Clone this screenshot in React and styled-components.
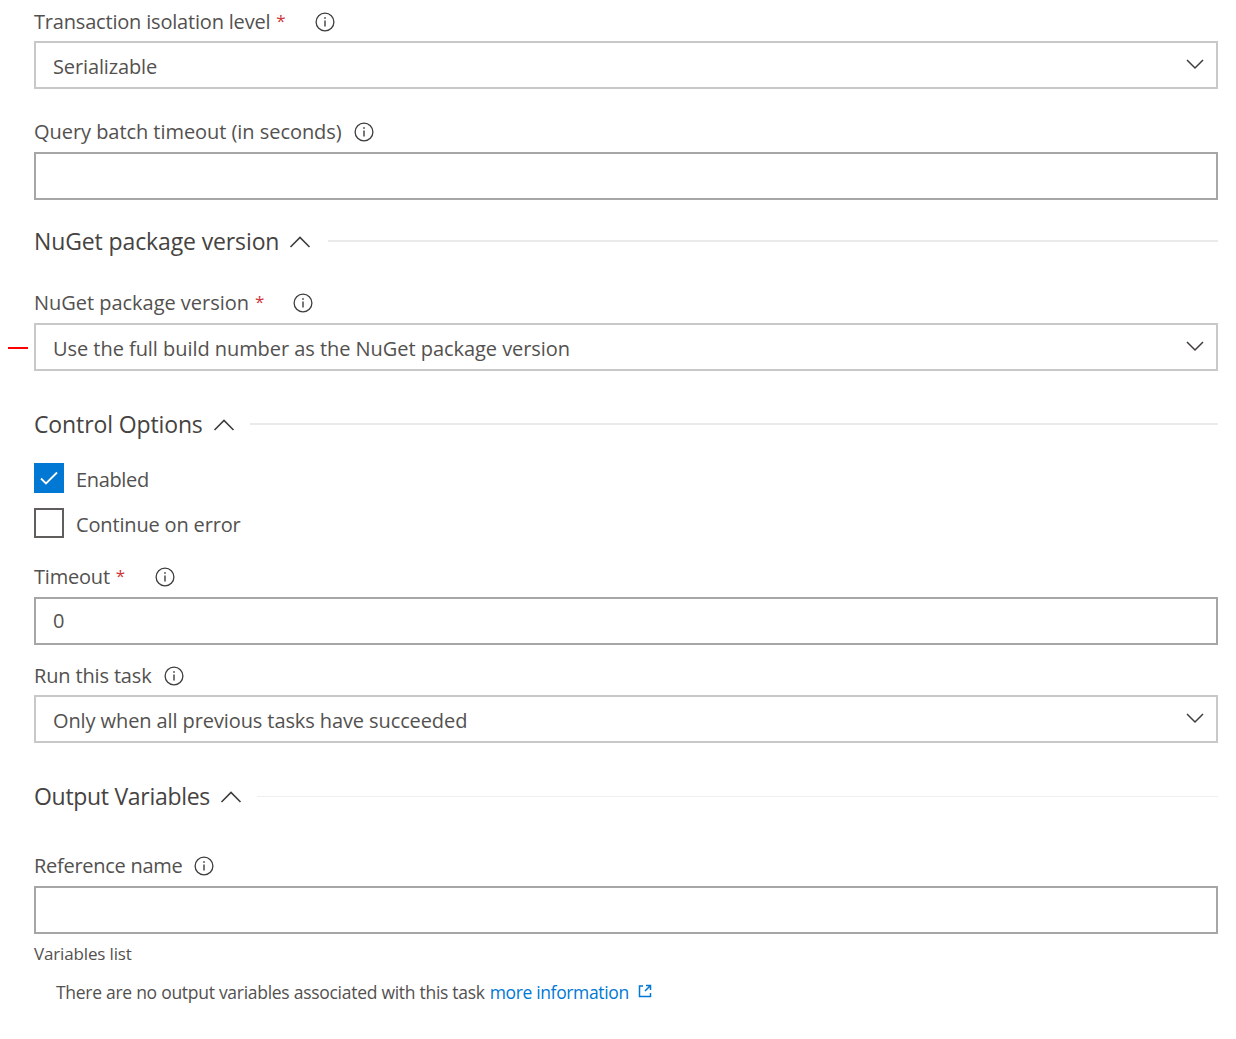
import React from "react";
import styled, { createGlobalStyle } from "styled-components";

const GlobalStyle = createGlobalStyle`
  html, body {
    margin: 0;
    padding: 0;
    background: #fff;
    font-family: "Open Sans", "Noto Sans", sans-serif;
    color: #323130;
  }
`;

const Page = styled.div`
  display: flex;
  flex-direction: column;
  padding: 0 18px 0 34px;
  height: 1039px;
  box-sizing: border-box;
  overflow: hidden;
`;

const Field = styled.div`
  position: relative;
  display: flex;
  flex-direction: column;
  margin-top: ${props => props.$top || 0}px;
`;

const LabelRow = styled.div`
  display: flex;
  align-items: center;
  height: 24px;
  box-sizing: border-box;
  padding-bottom: 2px;
  margin-bottom: ${props => props.$gap || 7}px;
  font-size: 20px;
  letter-spacing: ${props => props.$spacing ?? -0.08}px;
  color: #53514f;
  white-space: nowrap;
`;

const Star = styled.span`
  color: #d13438;
  font-size: 17px;
  margin: -2px 0 0 6px;
`;

const InfoWrap = styled.span`
  display: inline-flex;
  margin: 2px 0 0 ${props => props.$left}px;
`;

const Box = styled.div`
  display: flex;
  align-items: center;
  justify-content: space-between;
  height: 48px;
  box-sizing: border-box;
  padding: ${props => (props.$light ? "2px" : "0")} 11px ${props => (props.$light ? "0" : "2px")} 17px;
  background: #fff;
  border: 2px solid ${props => (props.$light ? "#c8c8c8" : "#a6a6a6")};
  font-size: 20px;
  letter-spacing: ${props => props.$spacing ?? -0.05}px;
  color: #53514f;
  white-space: nowrap;
`;

const Dash = styled.span`
  position: absolute;
  left: -26px;
  bottom: 22px;
  width: 20px;
  height: 2px;
  background: #ff0000;
`;

const Section = styled.div`
  display: flex;
  align-items: center;
  height: 32px;
  margin-top: ${props => props.$top}px;
`;

const SectionTitle = styled.span`
  margin-top: -2px;
  font-size: 23px;
  letter-spacing: ${props => props.$spacing ?? -0.12}px;
  color: #454341;
  white-space: nowrap;
`;

const SectionChevron = styled.svg`
  width: 22px;
  height: 12px;
  margin-left: 10px;
  flex: none;
  fill: none;
  stroke: #3f3d3b;
  stroke-width: 1.6;
`;

const Rule = styled.div`
  flex: 1;
  height: ${props => (props.$thin ? 1 : 2)}px;
  margin: 0 0 2px ${props => props.$gap}px;
  background: ${props => (props.$thin ? "#eeeeee" : "#eaeaea")};
`;

const CheckRow = styled.label`
  display: flex;
  align-items: center;
  gap: 12px;
  height: 30px;
  margin-top: ${props => props.$top}px;
  font-size: 20px;
  letter-spacing: ${props => props.$spacing}px;
  color: #53514f;
`;

const CheckText = styled.span`
  margin-top: 2px;
`;

const CheckBox = styled.span`
  display: flex;
  align-items: center;
  justify-content: center;
  width: 30px;
  height: 30px;
  box-sizing: border-box;
  background: ${props => (props.$checked ? "#0078d4" : "#fff")};
  border: 2px solid ${props => (props.$checked ? "#0078d4" : "#605e5c")};
`;

const SmallLabel = styled.div`
  margin-top: 8px;
  height: 24px;
  line-height: 24px;
  font-size: 17px;
  letter-spacing: -0.15px;
  color: #53514f;
`;

const Note = styled.div`
  display: flex;
  align-items: center;
  height: 24px;
  margin: 14px 0 0 22px;
  font-size: 17.5px;
  letter-spacing: -0.28px;
  color: #53514f;
  white-space: nowrap;
`;

const MoreLink = styled.a`
  margin-left: 5px;
  letter-spacing: -0.36px;
  color: #0078d4;
  text-decoration: none;
`;

const LinkIcon = styled.svg`
  width: 14px;
  height: 14px;
  margin: -2px 0 0 9px;
  fill: none;
  stroke: #0078d4;
  stroke-width: 1.5;
`;

const CaretIcon = styled.svg`
  width: 20px;
  height: 12px;
  margin-top: -4px;
  fill: none;
  stroke: #3f3d3b;
  stroke-width: 1.5;
`;

const Info = ({ left }) => (
  <InfoWrap $left={left}>
    <svg width="20" height="20" viewBox="0 0 20 20" fill="none" stroke="#3f3d3b" strokeWidth="1.3">
      <circle cx="10" cy="10" r="8.9" />
      <path d="M10 8.6v6" strokeWidth="1.4" />
      <path d="M10 5.2v1.6" strokeWidth="1.6" />
    </svg>
  </InfoWrap>
);

const Label = ({ text, required, infoLeft, gap, spacing }) => (
  <LabelRow $gap={gap} $spacing={spacing}>
    {text}
    {required && <Star>*</Star>}
    <Info left={infoLeft} />
  </LabelRow>
);

const Select = ({ value, spacing }) => (
  <Box $light $spacing={spacing}>
    {value}
    <CaretIcon viewBox="0 0 20 12">
      <path d="M2 2l8 8 8-8" />
    </CaretIcon>
  </Box>
);

const SectionHead = ({ title, top, thin, spacing, ruleGap }) => (
  <Section $top={top}>
    <SectionTitle $spacing={spacing}>{title}</SectionTitle>
    <SectionChevron viewBox="0 0 22 12">
      <path d="M1.5 11L11 1.5l9.5 9.5" />
    </SectionChevron>
    <Rule $thin={thin} $gap={ruleGap} />
  </Section>
);

export default function App() {
  return (
    <Page>
      <GlobalStyle />
      <Field $top={10}>
        <Label text="Transaction isolation level" required infoLeft={29} spacing={-0.19} />
        <Select value="Serializable" spacing={-0.13} />
      </Field>
      <Field $top={31}>
        <Label text="Query batch timeout (in seconds)" infoLeft={12} gap={8} spacing={-0.05} />
        <Box />
      </Field>
      <SectionHead title="NuGet package version" top={26} ruleGap={17} />
      <Field $top={33}>
        <Label text="NuGet package version" required infoLeft={29} gap={8} spacing={-0.03} />
        <Select value="Use the full build number as the NuGet package version" />
        <Dash />
      </Field>
      <SectionHead title="Control Options" top={38} ruleGap={15} />
      <CheckRow $top={22} $spacing={-0.35}>
        <CheckBox $checked>
          <svg width="18" height="14" viewBox="0 0 18 14" fill="none" stroke="#fff" strokeWidth="1.8">
            <path d="M1 7.5l5 5L17 1.5" />
          </svg>
        </CheckBox>
        <CheckText>Enabled</CheckText>
      </CheckRow>
      <CheckRow $top={15} $spacing={-0.16}>
        <CheckBox />
        <CheckText>Continue on error</CheckText>
      </CheckRow>
      <Field $top={27}>
        <Label text="Timeout" required infoLeft={30} gap={8} spacing={-0.2} />
        <Box>0</Box>
      </Field>
      <Field $top={19}>
        <Label text="Run this task" infoLeft={12} gap={7} spacing={-0.15} />
        <Select value="Only when all previous tasks have succeeded" spacing={-0.1} />
      </Field>
      <SectionHead title="Output Variables" top={38} thin spacing={-0.3} ruleGap={15} />
      <Field $top={41}>
        <Label text="Reference name" infoLeft={12} gap={8} spacing={-0.28} />
        <Box />
      </Field>
      <SmallLabel>Variables list</SmallLabel>
      <Note>
        There are no output variables associated with this task
        <MoreLink href="#">more information</MoreLink>
        <LinkIcon viewBox="0 0 14 14">
          <path d="M5 2H1.500v10.500h11V9" />
          <path d="M8 1.500h4.500V6M12.500 1.500L7 7" />
        </LinkIcon>
      </Note>
    </Page>
  );
}
